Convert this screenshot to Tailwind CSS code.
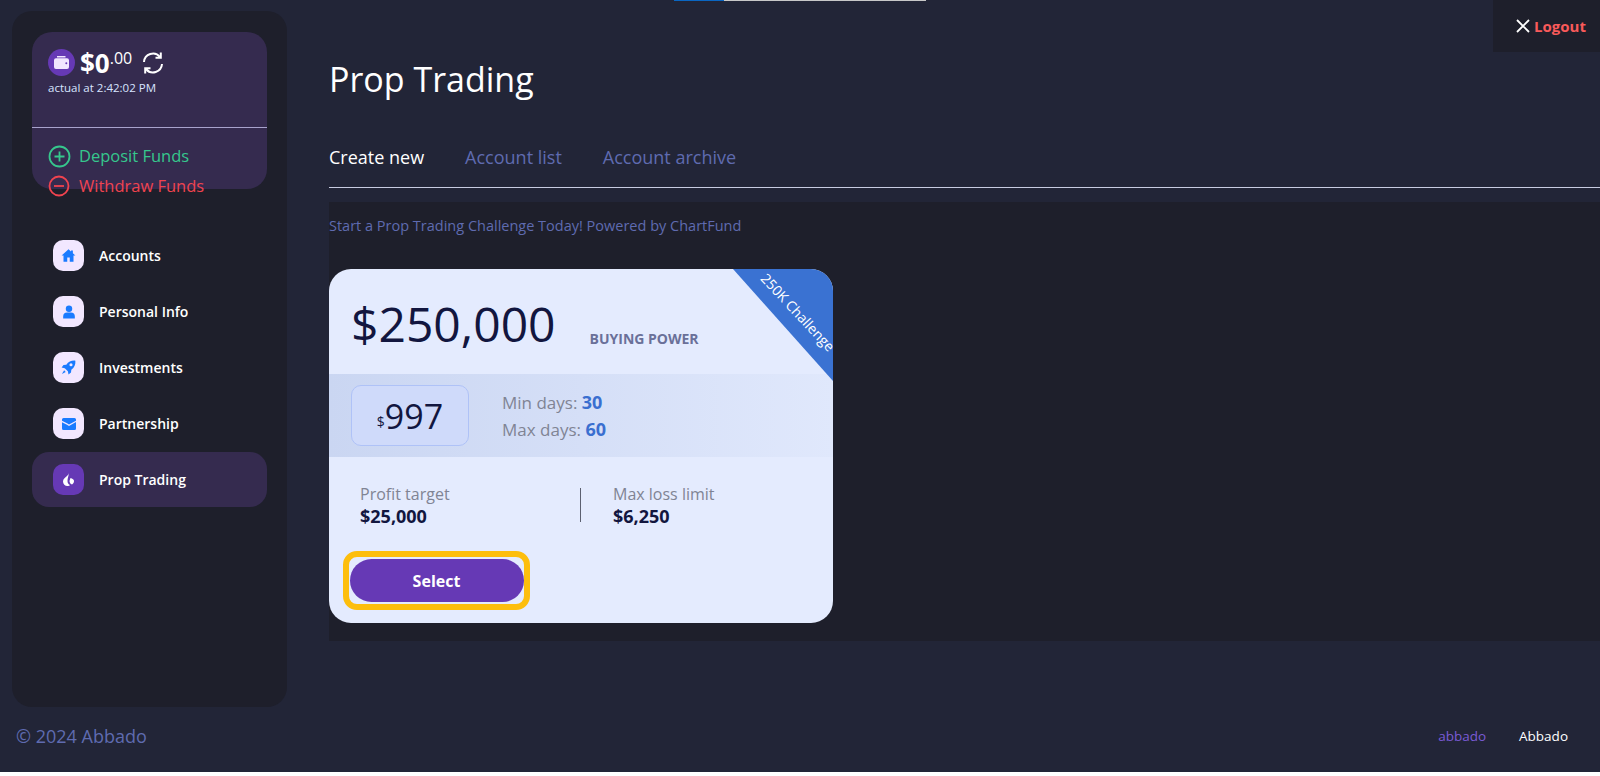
<!DOCTYPE html>
<html lang="en">
<head>
<meta charset="UTF-8">
<meta name="viewport" content="width=device-width, initial-scale=1.0">
<title>Prop Trading</title>
<script src="https://cdn.jsdelivr.net/npm/@tailwindcss/browser@4"></script>
</head>
<body class="bg-white font-['Open_Sans',sans-serif] overflow-hidden">
<div class="relative h-[772px] bg-[#222537] flex flex-col overflow-hidden">

  <!-- top loader -->
  <div class="absolute top-0 left-[674px] w-[252px] h-px flex">
    <div class="w-[50px] bg-[#0a66c2]"></div>
    <div class="flex-1 bg-[#c8c8c8]"></div>
  </div>

  <!-- logout -->
  <div class="absolute top-0 right-0 w-[107px] h-[52px] bg-[#1e1f2b] flex items-center pl-[22px] gap-[3px]">
    <svg class="w-[16px] h-[16px]" viewBox="0 0 16 16" fill="none" stroke="#fff" stroke-width="1.8"><path d="M2 2l12 12M14 2L2 14"/></svg>
    <span class="text-[15px] font-bold text-[#f95a5a]">Logout</span>
  </div>

  <div class="flex flex-1 pt-[11px] pl-[12px]">
    <!-- sidebar -->
    <aside class="w-[275px] h-[696px] shrink-0 bg-[#1e1f2b] rounded-[20px] px-[20px] pt-[21px]">
      <div class="h-[157px] bg-[#352b4f] rounded-[20px] text-white">
        <div class="h-[78px] border-b border-[#a8a3cc] px-[16px] pt-[17px] box-content">
          <div class="flex items-center h-[27px]">
            <span class="w-[27px] h-[27px] rounded-full bg-[#6639b5] flex items-center justify-center">
              <svg class="w-[15px] h-[13px]" viewBox="0 0 15 13" fill="#f1e6ff"><path d="M3 0h8.5v1.5H3zM2 2.2h11a2 2 0 0 1 2 2V11a2 2 0 0 1-2 2H2a2 2 0 0 1-2-2V4.2a2 2 0 0 1 2-2z"/><circle cx="12.3" cy="7.3" r="1" fill="#6639b5"/></svg>
            </span>
            <span class="ml-[5px] text-[26px] leading-none font-bold">$0</span>
            <span class="text-[16px] leading-none -mt-[9px]">.00</span>
            <svg class="ml-[9px] w-[24px] h-[24px]" viewBox="0 0 24 24" fill="none" stroke="#fff" stroke-width="2"><path d="M3 11a9 9 0 0 1 16-5"/><path d="M21 13a9 9 0 0 1-16 5"/><path d="M19.8 1.5v5.3h-5.300" /><path d="M4.200 22.500v-5.300h5.300"/></svg>
          </div>
          <p class="mt-[4px] text-[11.500px] leading-[16px] text-[#d8e4ff]">actual at 2:42:02 PM</p>
        </div>
        <div class="px-[16px] pt-[13px]">
          <div class="flex items-center h-[30px] text-[#36c78d]">
            <svg class="w-[23px] h-[23px]" viewBox="0 0 23 23" fill="none" stroke="currentColor" stroke-width="1.800"><circle cx="11.500" cy="11.500" r="10"/><path d="M11.500 6.500v10M6.500 11.500h10"/></svg>
            <span class="ml-[8px] text-[16.500px]">Deposit Funds</span>
          </div>
          <div class="flex items-center h-[30px] text-[#f0434f]">
            <svg class="w-[22px] h-[22px]" viewBox="0 0 22 22" fill="none" stroke="currentColor" stroke-width="1.800"><circle cx="11" cy="11" r="9.500"/><path d="M6 11h10"/></svg>
            <span class="ml-[9px] text-[16.500px]">Withdraw Funds</span>
          </div>
        </div>
      </div>

      <nav class="mt-[39px] flex flex-col gap-[1px] text-white text-[14px] font-semibold">
        <a class="flex items-center h-[55px] pl-[21px]">
          <span class="w-[31px] h-[31px] rounded-[10px] bg-[#f2e7ff] flex items-center justify-center">
            <svg class="w-[15px] h-[15px]" viewBox="0 0 24 24" fill="#1a7bff"><path d="M12 2 1 12h3v10h6v-7h4v7h6V12h3l-4-3.600V4h-3v1.700z"/></svg>
          </span>
          <span class="ml-[15px]">Accounts</span>
        </a>
        <a class="flex items-center h-[55px] pl-[21px]">
          <span class="w-[31px] h-[31px] rounded-[10px] bg-[#f2e7ff] flex items-center justify-center">
            <svg class="w-[14px] h-[14px]" viewBox="0 0 24 24" fill="#1a7bff"><circle cx="12" cy="6.500" r="5.500"/><path d="M2 23v-3a7 7 0 0 1 7-7h6a7 7 0 0 1 7 7v3z"/></svg>
          </span>
          <span class="ml-[15px]">Personal Info</span>
        </a>
        <a class="flex items-center h-[55px] pl-[21px]">
          <span class="w-[31px] h-[31px] rounded-[10px] bg-[#f2e7ff] flex items-center justify-center">
            <svg class="w-[15px] h-[15px]" viewBox="0 0 24 24" fill="#1a7bff"><path d="M23 1c-6-.5-11 1.500-14.500 6.500L4 8 1 12l5 1 5 5 1 5 4-3 .5-4.500C21.500 12 23.500 7 23 1zm-7 9a2.500 2.500 0 1 1 0-5 2.500 2.500 0 0 1 0 5z"/><path d="M5 16.500 1.500 22.500 7.500 19z"/></svg>
          </span>
          <span class="ml-[15px]">Investments</span>
        </a>
        <a class="flex items-center h-[55px] pl-[21px]">
          <span class="w-[31px] h-[31px] rounded-[10px] bg-[#f2e7ff] flex items-center justify-center">
            <svg class="w-[14px] h-[12px]" viewBox="0 0 14 12" fill="#1a7bff"><path d="M1.500 0h11A1.500 1.500 0 0 1 14 1.500V2.800L7 6.500 5 5.200 0 2.800V1.500A1.500 1.500 0 0 1 1.500 0zM0 4.200 5 6.700 7 8l7-4v6.500a1.500 1.500 0 0 1-1.500 1.500h-11A1.500 1.500 0 0 1 0 10.500z"/></svg>
          </span>
          <span class="ml-[15px]">Partnership</span>
        </a>
        <a class="flex items-center h-[55px] pl-[21px] bg-[#352b4f] rounded-[17px]">
          <span class="w-[31px] h-[31px] rounded-[10px] bg-[#6639b5] flex items-center justify-center">
            <svg class="w-[11px] h-[13px]" viewBox="0 0 11 13" fill="#fff"><path d="M6 0c-.5 1.500-1 2-2 3C2 4.500 0 6 0 8.500 0 11 2 13 4.500 13c1 0 2-.3 2.500-1-1.500-.5-2.500-2-2.500-4C4.500 5.500 5.500 3 6 0z"/><path d="M7.500 5 6.500 8c0 1.500 1 3 2.500 3.500C10.300 10.500 11 9.500 11 8c0-1.500-1.500-2.500-3.500-3z"/></svg>
          </span>
          <span class="ml-[15px]">Prop Trading</span>
        </a>
      </nav>
    </aside>

    <!-- main -->
    <main class="flex-1 ml-[42px] min-w-0">
      <h1 class="mt-[45px] text-[34px] leading-[46px] text-white">Prop Trading</h1>
      <div class="mt-[39px] flex gap-[41px] h-[47px] pt-[3px] border-b border-[#c8cbe0] text-[18px] leading-[26px] text-[#5f6bb0]">
        <span class="text-white">Create new</span>
        <span>Account list</span>
        <span>Account archive</span>
      </div>
      <section class="mt-[14px] h-[439px] bg-[#1e1f2b] pt-[14px]">
        <p class="text-[14.500px] leading-[20px] text-[#5f6bb0]">Start a Prop Trading Challenge Today! Powered by ChartFund</p>

        <!-- challenge card -->
        <div class="relative mt-[33px] w-[504px] h-[354px] bg-[#e4ebfe] rounded-[22px] overflow-hidden">
          <div class="flex items-end h-[105px] pl-[22px] pb-[18px]">
            <span class="text-[48px] leading-[64px] text-[#12163f]">$250,000</span>
            <span class="ml-[34px] mb-[7px] text-[14px] leading-[20px] font-bold text-[#6a7099]">BUYING POWER</span>
          </div>
          <div class="flex items-center h-[83px] pl-[22px] bg-gradient-to-r from-[#cad6f2] to-[#e0e8fc]">
            <div class="w-[118px] h-[61px] pt-[1px] flex items-center justify-center rounded-[10px] border border-[#afc2f7] bg-[#cfdafa] text-[#12163f]">
              <span class="text-[14px] mt-[10px]">$</span>
              <span class="text-[34px] leading-[46px]">997</span>
            </div>
            <div class="ml-[33px] text-[17px] leading-[26px] text-[#808494]">
              <div>Min days: <b class="text-[18px] text-[#3a6fd0]">30</b></div>
              <div>Max days: <b class="text-[18px] text-[#3a6fd0]">60</b></div>
            </div>
          </div>
          <div class="flex items-center mt-[26px] pl-[31px]">
            <div class="w-[220px]">
              <div class="text-[16px] leading-[22px] text-[#808494]">Profit target</div>
              <div class="text-[18px] leading-[22px] font-bold text-[#12163f]">$25,000</div>
            </div>
            <div class="w-px h-[34px] bg-[#5c6070]"></div>
            <div class="ml-[32px]">
              <div class="text-[16px] leading-[22px] text-[#808494]">Max loss limit</div>
              <div class="text-[18px] leading-[22px] font-bold text-[#12163f]">$6,250</div>
            </div>
          </div>
          <div class="mt-[24px] ml-[14px] w-[187px] h-[59px] rounded-[14px] border-[6px] border-[#fdbe0d] flex items-center justify-center">
            <button class="w-[174px] h-[43px] rounded-full bg-[#6639b5] text-white text-[16px] font-bold">Select</button>
          </div>

          <!-- corner ribbon -->
          <div class="absolute top-0 right-0 w-[100px] h-[112px] bg-[#3a72d2] [clip-path:polygon(0_0,100%_0,100%_100%)]"></div>
          <span class="absolute top-[38px] left-[417px] w-[110px] rotate-[47deg] text-[14px] leading-[18px] text-white whitespace-nowrap">250K Challenge</span>
        </div>
      </section>
    </main>
  </div>

  <!-- footer -->
  <footer class="absolute left-0 right-0 top-[722px] flex items-center justify-between pl-[16px] pr-[32px] h-[28px]">
    <span class="text-[18px] text-[#5f6bb0]">© 2024 Abbado</span>
    <div class="flex gap-[33px] text-[13.500px]">
      <span class="text-[#7b5bd6]">abbado</span>
      <span class="text-white">Abbado</span>
    </div>
  </footer>
</div>
</body>
</html>
